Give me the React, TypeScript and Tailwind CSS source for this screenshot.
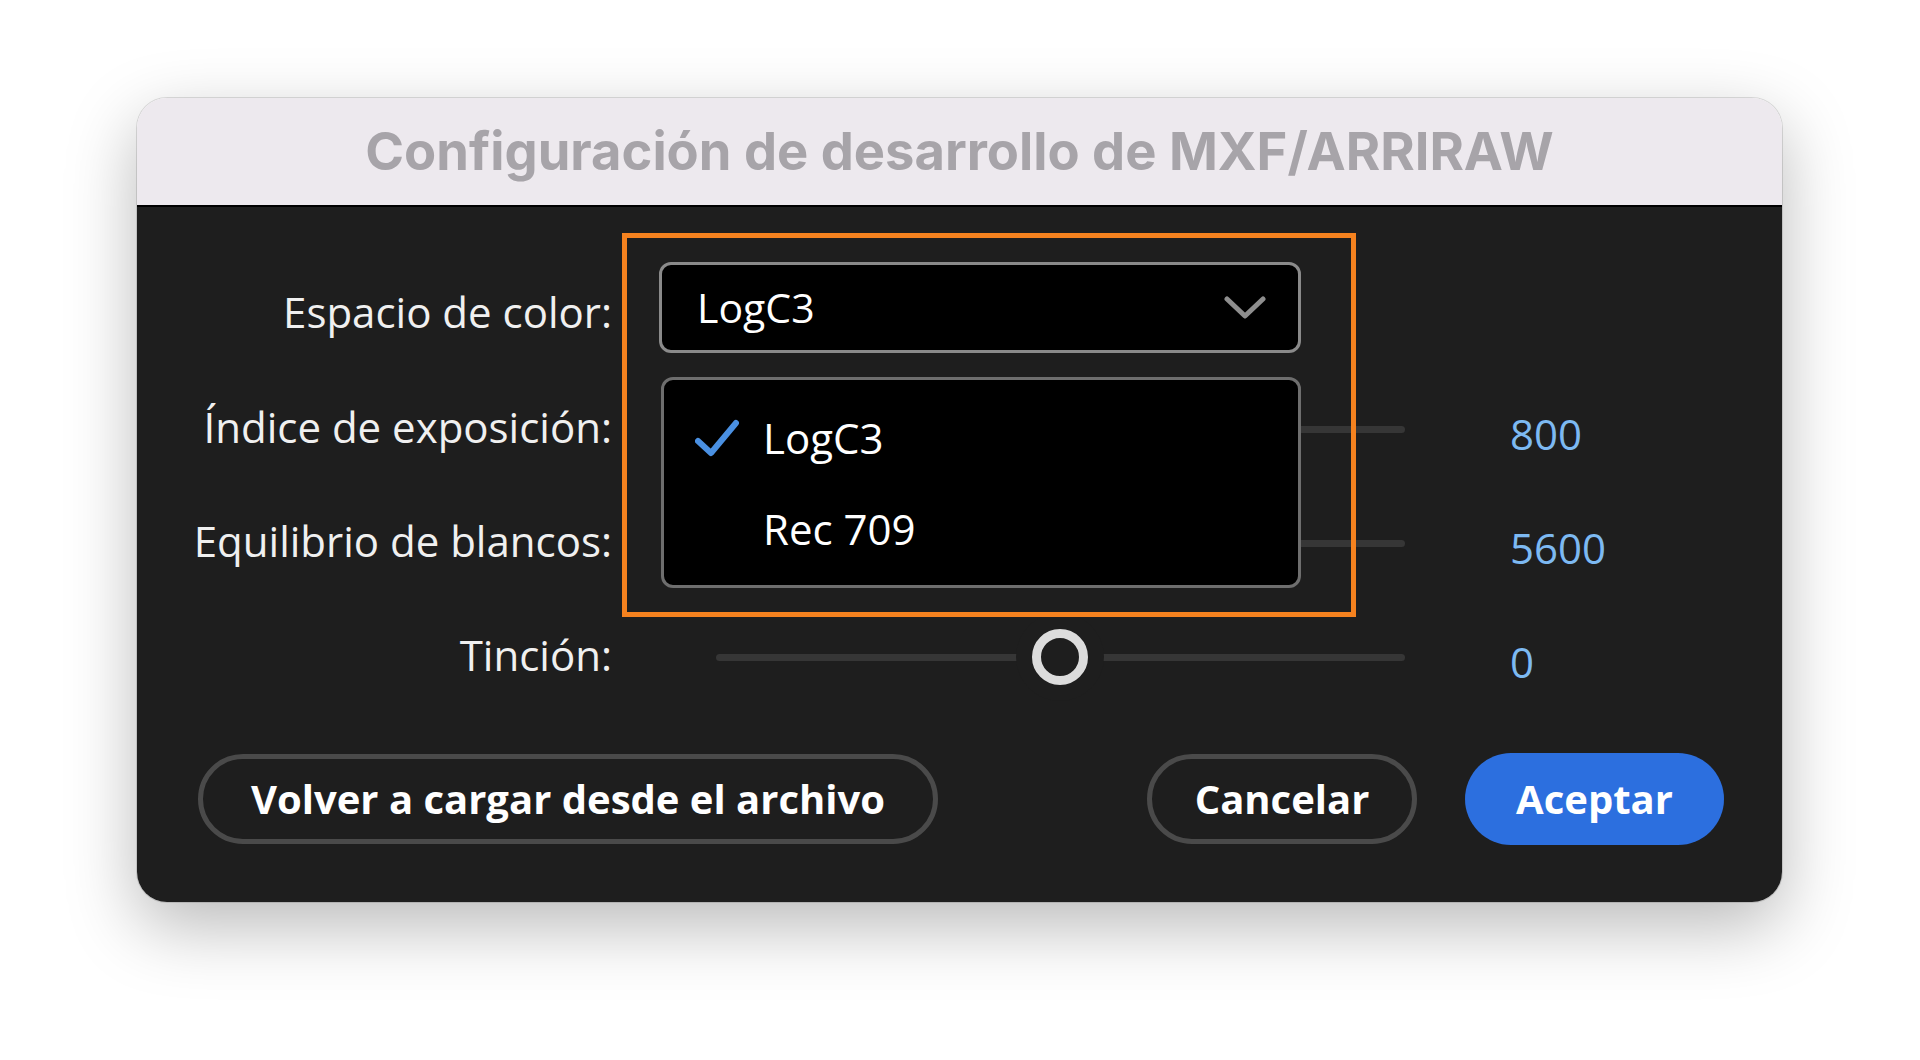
import React from 'react';

const body = "font-['Open_Sans','Noto_Sans',sans-serif]";

function Chevron() {
  return (
    <svg width="42" height="24" viewBox="0 0 42 24" fill="none">
      <polyline points="3,3 21,20 39,3" stroke="#8e8e8e" strokeWidth="5" strokeLinecap="round" strokeLinejoin="round" />
    </svg>
  );
}

function Check() {
  return (
    <svg width="44" height="38" viewBox="0 0 44 38" fill="none">
      <polyline points="3,22 16,34 41,4" stroke="#4a90e2" strokeWidth="6" strokeLinecap="round" strokeLinejoin="round" />
    </svg>
  );
}

function Slider({ pos }: { pos: number }) {
  return (
    <div className="relative ml-[57px] h-[7px] w-[689px] rounded-full bg-[#363636]">
      <div
        className="absolute top-1/2 h-[56px] w-[56px] -translate-x-1/2 -translate-y-1/2 rounded-full border-[9px] border-[#dcdcdc] bg-[#1e1e1e] shadow-[0_0_0_16px_#1e1e1e]"
        style={{ left: pos }}
      />
    </div>
  );
}

function Label({ text, className }: { text: string; className: string }) {
  return (
    <div className={`flex w-[414px] shrink-0 justify-end whitespace-nowrap text-[42px] font-medium text-[#f0f0f0] ${className}`}>
      <span>{text}</span>
    </div>
  );
}

function SliderRow({ label, value, pos }: { label: string; value: string; pos: number }) {
  return (
    <div className="flex h-[114px] items-center">
      <Label text={label} className="pb-[6px]" />
      <div className="ml-[47px] w-[746px]">
        <Slider pos={pos} />
      </div>
      <div className="ml-[105px] pt-[8px] text-[42px] text-[#7db9f2]">{value}</div>
    </div>
  );
}

export default function App() {
  return (
    <div className="min-h-screen w-full bg-white pt-[98px]">
      <div className="ml-[137px] w-[1645px] overflow-hidden rounded-[30px] shadow-[0_24px_70px_rgba(0,0,0,0.28),0_0_0_1px_rgba(0,0,0,0.12)]">
        <div className="flex h-[109px] items-center justify-center border-b-2 border-black bg-[#ede9ee]">
          <h1 className="font-['Inter','Roboto',sans-serif] text-[52.5px] font-bold text-[#a7a4a9]">
            Configuración de desarrollo de MXF/ARRIRAW
          </h1>
        </div>

        <div className={`bg-[#1e1e1e] pb-[57px] pl-[61px] pr-[58px] pt-[55px] ${body}`}>
          <div className="flex h-[91px] items-center">
            <Label text="Espacio de color:" className="pt-[8px]" />
            <div className="relative ml-[47px] w-[642px]">
              <div className="flex h-[91px] items-center justify-between rounded-[12px] border-[3px] border-[#8a8a8a] bg-black pl-[35px] pr-[32px]">
                <span className="text-[41px] text-white">LogC3</span>
                <Chevron />
              </div>

              <div className="absolute left-[2px] top-[115px] z-10 h-[211px] w-[640px] rounded-[12px] border-[3px] border-[#6e6e6e] bg-black pt-[12px]">
                <div className="flex h-[91px] items-center pl-[31px]">
                  <Check />
                  <span className="ml-[24px] text-[42px] text-white">LogC3</span>
                </div>
                <div className="flex h-[91px] items-center pl-[99px]">
                  <span className="text-[42px] text-white">Rec 709</span>
                </div>
              </div>

              <div className="pointer-events-none absolute left-[-37px] top-[-29px] z-20 h-[384px] w-[734px] border-[5px] border-[#f5821f]" />
            </div>
          </div>

          <div className="mt-[19px]">
            <SliderRow label="Índice de exposición:" value="800" pos={300} />
            <SliderRow label="Equilibrio de blancos:" value="5600" pos={320} />
            <SliderRow label="Tinción:" value="0" pos={344} />
          </div>

          <div className="mt-[39px] flex items-center justify-between">
            <button className="flex h-[90px] w-[740px] items-center justify-center rounded-full border-[5px] border-[#4a4a4a] text-[40px] font-bold text-white">
              Volver a cargar desde el archivo
            </button>
            <div className="flex items-center gap-[48px]">
              <button className="flex h-[90px] w-[270px] items-center justify-center rounded-full border-[5px] border-[#4a4a4a] text-[40px] font-bold text-white">
                Cancelar
              </button>
              <button className="flex h-[92px] w-[259px] items-center justify-center rounded-full bg-[#2c6fdf] text-[40px] font-bold text-white">
                Aceptar
              </button>
            </div>
          </div>
        </div>
      </div>
    </div>
  );
}
